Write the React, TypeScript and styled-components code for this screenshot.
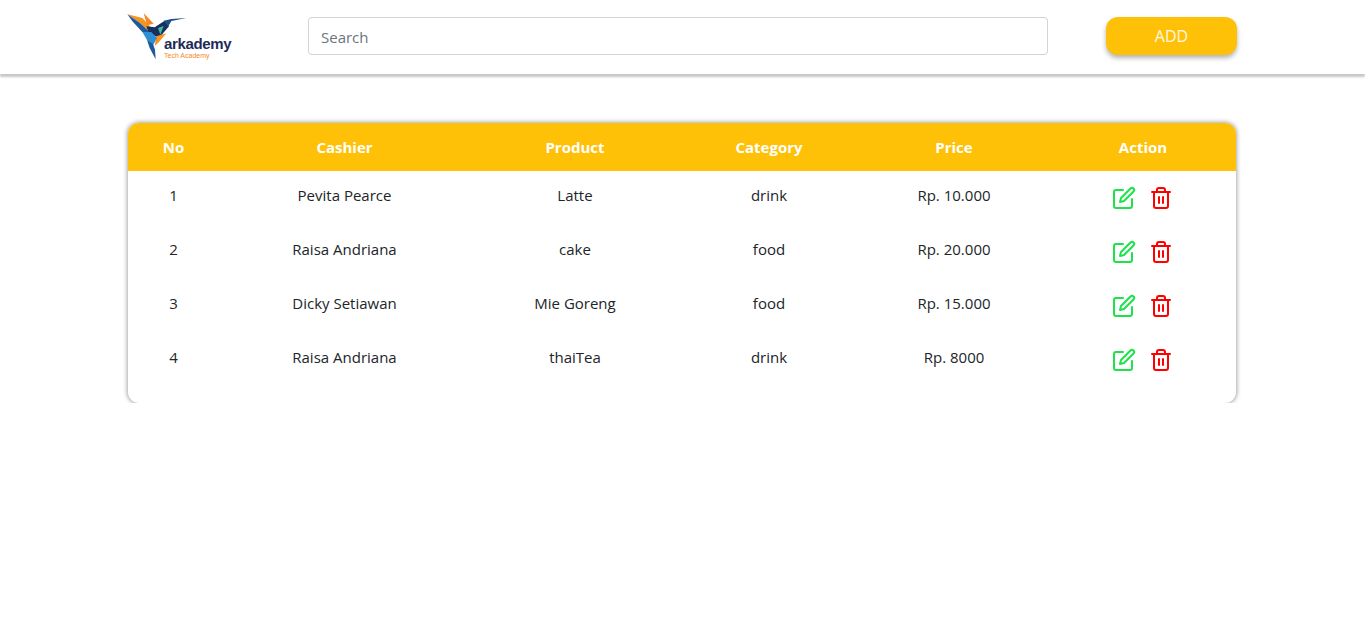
import React from 'react'
import styled, { createGlobalStyle } from 'styled-components'
import { FiEdit, FiTrash2 } from 'react-icons/fi'

const GlobalStyle = createGlobalStyle`
  html, body {
    margin: 0;
    padding: 0;
    background: #fff;
    font-family: 'Open Sans', 'Noto Sans', Arial, sans-serif;
    color: #212529;
  }
  * { box-sizing: border-box; }
`

const Navbar = styled.header`
  height: 74px;
  background: #fff;
  box-shadow: 0 3px 2px rgba(0, 0, 0, 0.22);
  display: grid;
  grid-template-columns: 181px 740px 1fr;
  align-items: start;
  padding: 17px 128px 0 127px;
`

const Logo = styled.div`
  position: relative;
  width: 106px;
  height: 50px;
  margin-top: -5px;
`

const BirdSvg = styled.svg`
  position: absolute;
  left: -4px;
  top: -4px;
`

const LogoName = styled.span`
  position: absolute;
  left: 37px;
  top: 23px;
  font-family: 'Liberation Sans', Arial, sans-serif;
  font-size: 15px;
  font-weight: 700;
  letter-spacing: -0.35px;
  color: #1d2b58;
`

const LogoTag = styled.span`
  position: absolute;
  left: 37px;
  top: 40px;
  font-family: 'Liberation Sans', Arial, sans-serif;
  font-size: 7px;
  color: #f58a23;
`

const SearchInput = styled.input`
  width: 740px;
  height: 38px;
  padding: 8px 12px 6px;
  font: 15px 'Open Sans', sans-serif;
  border: 1px solid #ced4da;
  border-radius: 4px;
  outline: none;
  &::placeholder { color: #6c757d; }
`

const AddButton = styled.button`
  justify-self: end;
  width: 131px;
  height: 38px;
  padding: 0;
  border: 0;
  border-radius: 12px;
  background: #ffc107;
  color: #fff8e1;
  font: 16px 'Open Sans', sans-serif;
  box-shadow: 0 3px 5px rgba(0, 0, 0, 0.3);
`

const Card = styled.section`
  width: 1108px;
  margin: 49px 0 0 128px;
  padding-bottom: 16px;
  border-radius: 11px;
  overflow: hidden;
  background: #fff;
  box-shadow: 0 0 4px 1px rgba(0, 0, 0, 0.35);
`

const Row = styled.div`
  display: grid;
  grid-template-columns: 91px 251px 210px 178px 192px 1fr;
  text-align: center;
`

const HeadRow = styled(Row)`
  height: 48px;
  align-items: center;
  background: #ffc107;
  color: #fff;
  font-size: 15px;
  font-weight: 700;
`

const BodyRow = styled(Row)`
  height: 54px;
  padding-top: 12px;
  font-size: 15px;
  line-height: 24px;
`

const Actions = styled.div`
  display: flex;
  justify-content: center;
  gap: 13px;
  margin-top: 3px;
  padding-right: 2px;
  font-size: 24px;
`

const EditIcon = styled(FiEdit)`
  color: #1de34b;
`

const TrashIcon = styled(FiTrash2)`
  color: #f00;
`

const rows = [
  { no: 1, cashier: 'Pevita Pearce', product: 'Latte', category: 'drink', price: 'Rp. 10.000' },
  { no: 2, cashier: 'Raisa Andriana', product: 'cake', category: 'food', price: 'Rp. 20.000' },
  { no: 3, cashier: 'Dicky Setiawan', product: 'Mie Goreng', category: 'food', price: 'Rp. 15.000' },
  { no: 4, cashier: 'Raisa Andriana', product: 'thaiTea', category: 'drink', price: 'Rp. 8000' },
]

const Bird = () => (
  <BirdSvg width="70" height="56" viewBox="0 0 210 168">
    <polygon points="13,19 58,30 88,62 80,72 50,44" fill="#f7941d" />
    <polygon points="13,19 50,44 80,72 58,72 30,42" fill="#1c5a9c" />
    <polygon points="62,15 92,47 72,52" fill="#f58a23" />
    <polygon points="70,55 95,58 125,38 138,55 108,90 78,75" fill="#17305f" />
    <polygon points="122,38 145,33 190,30 145,39 136,55" fill="#1d4f86" />
    <polygon points="105,60 122,54 112,80" fill="#3fb8a0" />
    <polygon points="100,85 130,76 108,102 95,114" fill="#f7941d" />
    <polygon points="58,72 85,72 102,90 90,112 72,96" fill="#2f8fd0" />
    <polygon points="72,96 90,108 96,125 98,154 80,120" fill="#1c5a9c" />
  </BirdSvg>
)

export default function App() {
  return (
    <>
      <GlobalStyle />
      <Navbar>
        <Logo>
          <Bird />
          <LogoName>arkademy</LogoName>
          <LogoTag>Tech Academy</LogoTag>
        </Logo>
        <SearchInput placeholder="Search" />
        <AddButton>ADD</AddButton>
      </Navbar>
      <Card>
        <HeadRow>
          <div>No</div>
          <div>Cashier</div>
          <div>Product</div>
          <div>Category</div>
          <div>Price</div>
          <div>Action</div>
        </HeadRow>
        {rows.map((r) => (
          <BodyRow key={r.no}>
            <div>{r.no}</div>
            <div>{r.cashier}</div>
            <div>{r.product}</div>
            <div>{r.category}</div>
            <div>{r.price}</div>
            <Actions>
              <EditIcon />
              <TrashIcon />
            </Actions>
          </BodyRow>
        ))}
      </Card>
    </>
  )
}
